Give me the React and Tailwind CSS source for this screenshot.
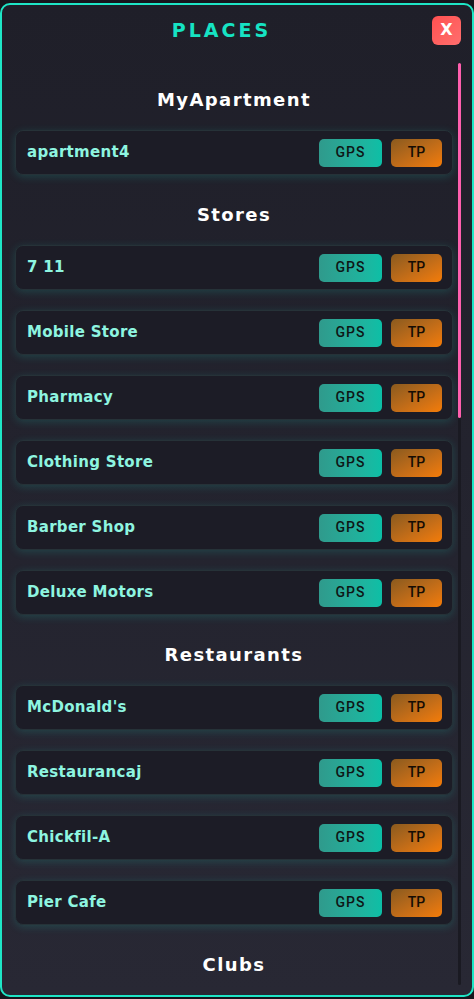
const sections = [
  { title: 'MyApartment', places: ['apartment4'] },
  {
    title: 'Stores',
    places: ['7 11', 'Mobile Store', 'Pharmacy', 'Clothing Store', 'Barber Shop', 'Deluxe Motors'],
  },
  { title: 'Restaurants', places: ["McDonald's", 'Restaurancaj', 'Chickfil-A', 'Pier Cafe'] },
  { title: 'Clubs', places: [] },
];

const display = { fontFamily: '"DejaVu Sans", "Noto Sans", sans-serif' };
const btnFont = { fontFamily: 'Roboto, "Liberation Sans", sans-serif' };

function PlaceRow({ name }) {
  return (
    <div className="mb-5 flex h-[45px] items-center justify-between rounded-[8px] border border-[#263238] bg-[#1c1c26] pl-[11px] pr-[10px] shadow-[0_2px_8px_rgba(30,200,180,0.2)]">
      <span className="text-[15px] font-bold tracking-[0.3px] text-[#8ef5e0]" style={display}>
        {name}
      </span>
      <div className="flex items-center gap-[9px]" style={btnFont}>
        <button className="h-[28px] w-[63px] rounded-[5px] bg-gradient-to-r from-[#2f9a8c] to-[#0cbfa6] text-[14px] font-medium tracking-[1px] text-[#0e1716]">
          GPS
        </button>
        <button className="h-[28px] w-[51px] rounded-[5px] bg-gradient-to-br from-[#8a5a1e] to-[#f47c06] text-[14px] font-medium text-[#140c04]">
          TP
        </button>
      </div>
    </div>
  );
}

export default function App() {
  return (
    <div className="min-h-screen bg-[#16161d] pt-[3px]">
      <div className="flex h-[994px] flex-col overflow-hidden rounded-[10px] border-2 border-[#1ee6c6] bg-gradient-to-b from-[#1f1f29] to-[#282834]">
        {/* header */}
        <div className="flex h-[50px] items-center pl-[9px] pr-[11px]">
          <h1 className="flex-1 text-center text-[19px] font-bold tracking-[3px] text-[#16e3c3]" style={display}>
            PLACES
          </h1>
          <button
            className="flex h-[29px] w-[29px] items-center justify-center rounded-[6px] bg-gradient-to-br from-[#ff5050] to-[#ff6e6e] text-[16px] font-bold text-white"
            style={display}
          >
            X
          </button>
        </div>

        {/* list + scrollbar */}
        <div className="flex flex-1 overflow-hidden pr-[11px]">
          <div className="flex-1 overflow-hidden pl-[13px] pr-[5px] pt-[25px]">
            {sections.map((s) => (
              <div key={s.title}>
                <h2
                  className="pb-[17px] pt-[7px] text-center text-[18px] font-bold leading-[26px] tracking-[1.4px] text-white"
                  style={display}
                >
                  {s.title}
                </h2>
                {s.places.map((p) => (
                  <PlaceRow key={p} name={p} />
                ))}
              </div>
            ))}
          </div>
          <div className="mb-[10px] mt-[8px] flex w-[3px] flex-col rounded-full bg-[#1a1a22]">
            <div className="h-[355px] rounded-full bg-[#ff5fae]" />
          </div>
        </div>
      </div>
    </div>
  );
}
